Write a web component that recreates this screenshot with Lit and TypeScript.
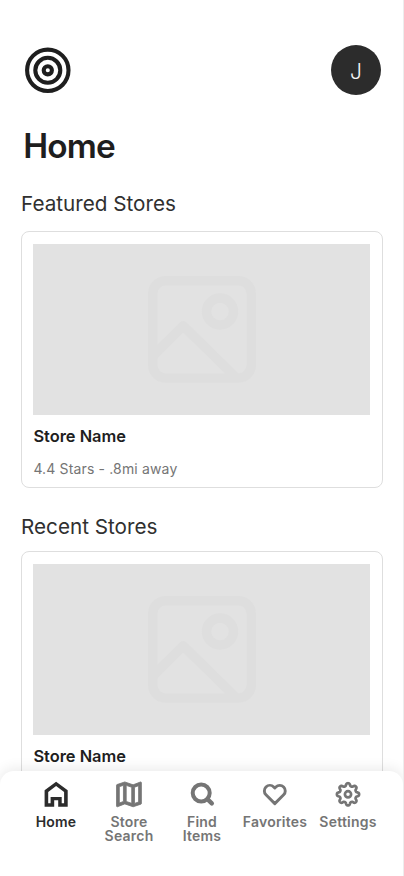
import { LitElement, html, svg, css } from "lit";
import { customElement, property } from "lit/decorators.js";

// Outline of an eight-lobed gear centred on (15, 15.3)
const gearOutline = (() => {
  const points: string[] = [];
  for (let i = 0; i < 160; i++) {
    const angle = (i / 160) * Math.PI * 2;
    const wave = Math.tanh(1.5 * Math.cos(angle * 8)) / Math.tanh(1.5);
    const radius = 9.75 + 1.35 * wave;
    points.push(`${(15 + radius * Math.sin(angle)).toFixed(2)} ${(15.3 - radius * Math.cos(angle)).toFixed(2)}`);
  }
  return `M${points.join("L")}z`;
})();

const icons = {
  home: svg`<path fill="currentColor" fill-rule="evenodd" d="M3.6 11.2 15.1 2.8l11.6 8.4v16.6H17.2v-6.6h-4v6.6H3.6zM7.2 24.3h2.4v-6.3h11.1v6.3h2.4V12.9L15.1 7.1 7.2 12.9z"/>`,
  map: svg`<path transform="translate(-1.6 -1.2) scale(1.38)" fill="currentColor" stroke="currentColor" stroke-width=".6" d="M20.5 3l-.16.03L15 5.1 9 3 3.36 4.9c-.21.07-.36.25-.36.48V20.5c0 .28.22.5.5.5l.16-.03L9 18.9l6 2.1 5.64-1.9c.21-.07.36-.25.36-.48V3.5c0-.28-.22-.5-.5-.5zM10 5.47l4 1.4v11.66l-4-1.4V5.47zm-5 .99 3-1.01v11.7l-3 1.16V6.46zm14 11.08-3 1.01V6.86l3-1.16v11.84z"/>`,
  search: svg`<g fill="none" stroke="currentColor"><circle cx="14.2" cy="14" r="8.5" stroke-width="4"/><path d="m20.4 20.2 4.4 4.2" stroke-width="4.4" stroke-linecap="round"/></g>`,
  heart: svg`<path transform="translate(2.8 3.4)" fill="none" stroke="currentColor" stroke-width="2.9" stroke-linejoin="round" d="M20.84 4.61a5.5 5.5 0 0 0-7.78 0L12 5.67l-1.06-1.06a5.5 5.5 0 0 0-7.78 7.78L12 21.23l8.84-8.84a5.5 5.5 0 0 0 0-7.78z"/>`,
  settings: svg`<g fill="none" stroke="currentColor" stroke-width="2.7" stroke-linejoin="round"><circle cx="15" cy="15.3" r="3.1"/><path d=${gearOutline}/></g>`,
};

const tabs: { icon: keyof typeof icons; label: string[] }[] = [
  { icon: "home", label: ["Home"] },
  { icon: "map", label: ["Store", "Search"] },
  { icon: "search", label: ["Find", "Items"] },
  { icon: "heart", label: ["Favorites"] },
  { icon: "settings", label: ["Settings"] },
];

@customElement("store-card")
export class StoreCard extends LitElement {
  @property() name = "";
  @property() detail = "";

  static styles = css`
    :host {
      display: block;
      box-sizing: border-box;
      height: 257px;
      padding: 12px 12px 0 11.4px;
      border: 1px solid #dedede;
      border-radius: 8px;
      background: #fff;
    }
    .picture {
      display: flex;
      justify-content: center;
      align-items: center;
      height: 171px;
      background: #e2e2e2;
    }
    .name {
      margin-top: 10px;
      font-size: 16.4px;
      line-height: 22px;
      font-weight: 600;
      color: #1e1e1e;
    }
    .detail {
      margin-top: 12px;
      font-size: 14px;
      line-height: 20px;
      letter-spacing: 0.15px;
      color: #757575;
    }
  `;

  render() {
    return html`
      <div class="picture">
        <svg width="108" height="107" viewBox="0 0 108 107" fill="none" stroke="#dedede" stroke-width="9.4" stroke-linejoin="round">
          <rect x="4.7" y="4.7" width="98.6" height="97.4" rx="13" />
          <circle cx="72" cy="35.5" r="13.5" />
          <path d="m4.7 80 30.5-30.2L88.5 102" />
        </svg>
      </div>
      <div class="name">${this.name}</div>
      <div class="detail">${this.detail}</div>
    `;
  }
}

@customElement("app-root")
export class AppRoot extends LitElement {
  static styles = css`
    :host {
      display: block;
      position: relative;
      box-sizing: border-box;
      height: 876px;
      overflow: hidden;
      border-right: 1px solid #ededed;
      background: #fff;
      font-family: Inter, "Liberation Sans", sans-serif;
      color: #1e1e1e;
    }
    .screen {
      padding: 45px 20px 0 21px;
    }
    .top {
      display: flex;
      justify-content: space-between;
      align-items: center;
      height: 50px;
      padding: 0 2px 0 3px;
    }
    .avatar {
      display: flex;
      justify-content: center;
      align-items: center;
      box-sizing: border-box;
      width: 50px;
      height: 50px;
      padding-top: 2px;
      border-radius: 50%;
      background: #2c2c2c;
      color: #f5f5f5;
      font-size: 21px;
      font-weight: 300;
    }
    h1 {
      margin: 30px 0 0 2.2px;
      font-size: 33.4px;
      line-height: 42px;
      font-weight: 600;
      letter-spacing: -0.8px;
    }
    h2 {
      margin: 23px 0 13px;
      font-size: 20.7px;
      line-height: 28px;
      font-weight: 400;
      color: #303030;
    }
    .recent {
      margin: 25px 0 10px;
    }
    .tabs {
      position: absolute;
      left: 0;
      right: 0;
      bottom: 0;
      display: grid;
      grid-template-columns: repeat(5, 73px);
      justify-content: center;
      box-sizing: border-box;
      height: 105px;
      padding: 8px 0 0 1px;
      border-radius: 14px 14px 0 0;
      background: #fff;
      box-shadow: 0 -2px 14px rgba(0, 0, 0, 0.09);
    }
    .tab {
      display: flex;
      flex-direction: column;
      align-items: center;
      color: #757575;
      font-size: 14px;
      line-height: 14px;
      letter-spacing: 0.22px;
      font-weight: 600;
      text-align: center;
    }
    .tab.current {
      color: #2c2c2c;
    }
    .label {
      margin-top: 6px;
      white-space: pre-line;
    }
  `;

  render() {
    return html`
      <main class="screen">
        <div class="top">
          <svg width="48" height="48" viewBox="0 0 48 48" fill="none" stroke="#1e1e1e" stroke-width="4.1">
            <circle cx="23.8" cy="24.3" r="20.7" />
            <circle cx="23.8" cy="24.3" r="12.5" />
            <circle cx="23.8" cy="24.3" r="4.1" />
          </svg>
          <div class="avatar">J</div>
        </div>
        <h1>Home</h1>
        <h2>Featured Stores</h2>
        <store-card name="Store Name" detail="4.4 Stars - .8mi away"></store-card>
        <h2 class="recent">Recent Stores</h2>
        <store-card name="Store Name" detail="4.4 Stars - .8mi away"></store-card>
      </main>
      <nav class="tabs">
        ${tabs.map(
          (tab, i) => html`<div class="tab ${i === 0 ? "current" : ""}">
            <svg width="30" height="30" viewBox="0 0 30 30">${icons[tab.icon]}</svg>
            <div class="label">${tab.label.join("\n")}</div>
          </div>`
        )}
      </nav>
    `;
  }
}
